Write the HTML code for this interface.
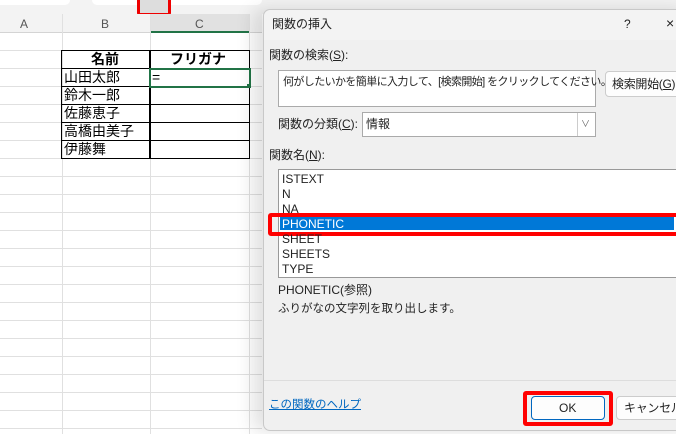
<!DOCTYPE html><html><head><style>
body{margin:0;width:676px;height:434px;overflow:hidden;background:#fff;position:relative;font-family:"Liberation Sans","Noto Sans CJK JP",sans-serif;}
.a{position:absolute}
.t{position:absolute;font-size:12px;color:#222;white-space:nowrap;line-height:14px}
</style></head><body>
<div class="a" style="left:0;top:0;width:676px;height:14px;background:#f3f3f3"></div>
<div class="a" style="left:0;top:0;width:70px;height:5px;background:#fff;border-radius:0 0 6px 0"></div>
<div class="a" style="left:92px;top:0;width:170px;height:5px;background:#fff;border-radius:0 0 6px 6px"></div>
<div class="a" style="left:137px;top:-4px;width:28px;height:14px;border:3px solid #e00;border-radius:3px;background:#ddd"></div>
<div class="a" style="left:0;top:14px;width:262px;height:18px;background:#f3f3f3;border-bottom:1px solid #d4d4d4"></div>
<div class="a" style="left:150px;top:14px;width:99px;height:17px;background:#e1e1e1;border-bottom:2px solid #217346"></div>
<div class="a" style="left:62px;top:14px;width:1px;height:420px;background:#e0e0e0"></div>
<div class="a" style="left:150px;top:14px;width:1px;height:420px;background:#e0e0e0"></div>
<div class="a" style="left:249px;top:14px;width:1px;height:420px;background:#e0e0e0"></div>
<div class="t" style="left:20px;top:17px;color:#555">A</div>
<div class="t" style="left:101px;top:17px;color:#555">B</div>
<div class="t" style="left:195px;top:17px;color:#555">C</div>
<div class="a" style="left:0;top:50px;width:262px;height:384px;background:repeating-linear-gradient(#e0e0e0 0 1px,transparent 1px 18px)"></div>
<div class="a" style="left:61px;top:50px;width:88px;height:107px;border:1px solid #000;background:repeating-linear-gradient(transparent 0 17px,#000 17px 18px);"></div>
<div class="a" style="left:149px;top:50px;width:99px;height:107px;border:1px solid #000;background:repeating-linear-gradient(transparent 0 17px,#000 17px 18px);"></div>
<div class="a" style="left:149px;top:68px;width:98px;height:16px;border:2px solid #217346"></div>
<div class="a" style="left:247px;top:84px;width:4px;height:4px;background:#217346"></div>
<div class="t" style="left:91px;top:52px;font-weight:bold;font-size:14px;color:#000">名前</div>
<div class="t" style="left:170px;top:52px;font-weight:bold;font-size:14px;color:#000">フリガナ</div>
<div class="t" style="left:64px;top:70px;font-size:14px;color:#000">山田太郎</div>
<div class="t" style="left:152px;top:70px;font-size:14px;color:#000">=</div>
<div class="t" style="left:64px;top:88px;font-size:14px;color:#000">鈴木一郎</div>
<div class="t" style="left:64px;top:106px;font-size:14px;color:#000">佐藤恵子</div>
<div class="t" style="left:64px;top:124px;font-size:14px;color:#000">高橋由美子</div>
<div class="t" style="left:64px;top:142px;font-size:14px;color:#000">伊藤舞</div>
<div class="a" style="left:263px;top:9px;width:430px;height:420px;background:#f0f0f0;border:1px solid #c8c8c8;border-radius:7px;box-shadow:-10px 0 18px rgba(0,0,0,.12)"></div>
<div class="a" style="left:264px;top:10px;width:420px;height:30px;background:#f3f3f3;border-radius:7px 0 0 0"></div>
<div class="t" style="left:272px;top:17px">関数の挿入</div>
<div class="t" style="left:624px;top:17px">?</div>
<div class="t" style="left:666px;top:16px;font-size:14px">×</div>
<div class="t" style="left:269px;top:48px">関数の検索(<u>S</u>):</div>
<div class="a" style="left:278px;top:70px;width:316px;height:35px;background:#fff;border:1px solid #aaa"></div>
<div class="t" style="left:283px;top:75px;font-size:11px;letter-spacing:-0.6px">何がしたいかを簡単に入力して、[検索開始] をクリックしてください。</div>
<div class="a" style="left:605px;top:71px;width:80px;height:24px;background:#fdfdfd;border:1px solid #ccc;border-radius:4px"></div>
<div class="t" style="left:612px;top:77px;letter-spacing:-0.3px">検索開始(<u>G</u>)</div>
<div class="t" style="left:278px;top:117px">関数の分類(<u>C</u>):</div>
<div class="a" style="left:362px;top:112px;width:232px;height:23px;background:#fff;border:1px solid #aaa"></div>
<div class="a" style="left:577px;top:113px;width:17px;height:23px;border-left:1px solid #ccc"></div>
<div class="t" style="left:581px;top:117px;font-size:9px;color:#666">∨</div>
<div class="t" style="left:366px;top:117px">情報</div>
<div class="t" style="left:269px;top:148px">関数名(<u>N</u>):</div>
<div class="a" style="left:278px;top:169px;width:410px;height:107px;background:#fff;border:1px solid #999"></div>
<div class="a" style="left:280px;top:216px;width:394px;height:14px;background:#0078d7"></div>
<div class="a" style="left:268px;top:213px;width:410px;height:15px;border:4px solid #f00;border-radius:3px"></div>
<div class="t" style="left:282px;top:172px">ISTEXT</div>
<div class="t" style="left:282px;top:187px">N</div>
<div class="t" style="left:282px;top:202px">NA</div>
<div class="t" style="left:282px;top:217px;color:#fff">PHONETIC</div>
<div class="t" style="left:282px;top:232px">SHEET</div>
<div class="t" style="left:282px;top:247px">SHEETS</div>
<div class="t" style="left:282px;top:262px">TYPE</div>
<div class="t" style="left:278px;top:283px">PHONETIC(参照)</div>
<div class="t" style="left:278px;top:302px;font-size:11.5px">ふりがなの文字列を取り出します。</div>
<div class="a" style="left:264px;top:380px;width:420px;height:1px;background:#ddd"></div>
<div class="t" style="left:269px;top:398px;color:#0067c0;text-decoration:underline;font-size:11.5px">この関数のヘルプ</div>
<div class="a" style="left:523px;top:391px;width:82px;height:27px;border:4px solid #f00;border-radius:3px"></div>
<div class="a" style="left:531px;top:396px;width:72px;height:22px;background:#fdfdfd;border:1px solid #0067c0;border-radius:4px"></div>
<div class="t" style="left:559px;top:401px">OK</div>
<div class="a" style="left:616px;top:396px;width:80px;height:22px;background:#fdfdfd;border:1px solid #ccc;border-radius:4px"></div>
<div class="t" style="left:624px;top:401px;letter-spacing:-0.3px">キャンセル</div>
</body></html>
